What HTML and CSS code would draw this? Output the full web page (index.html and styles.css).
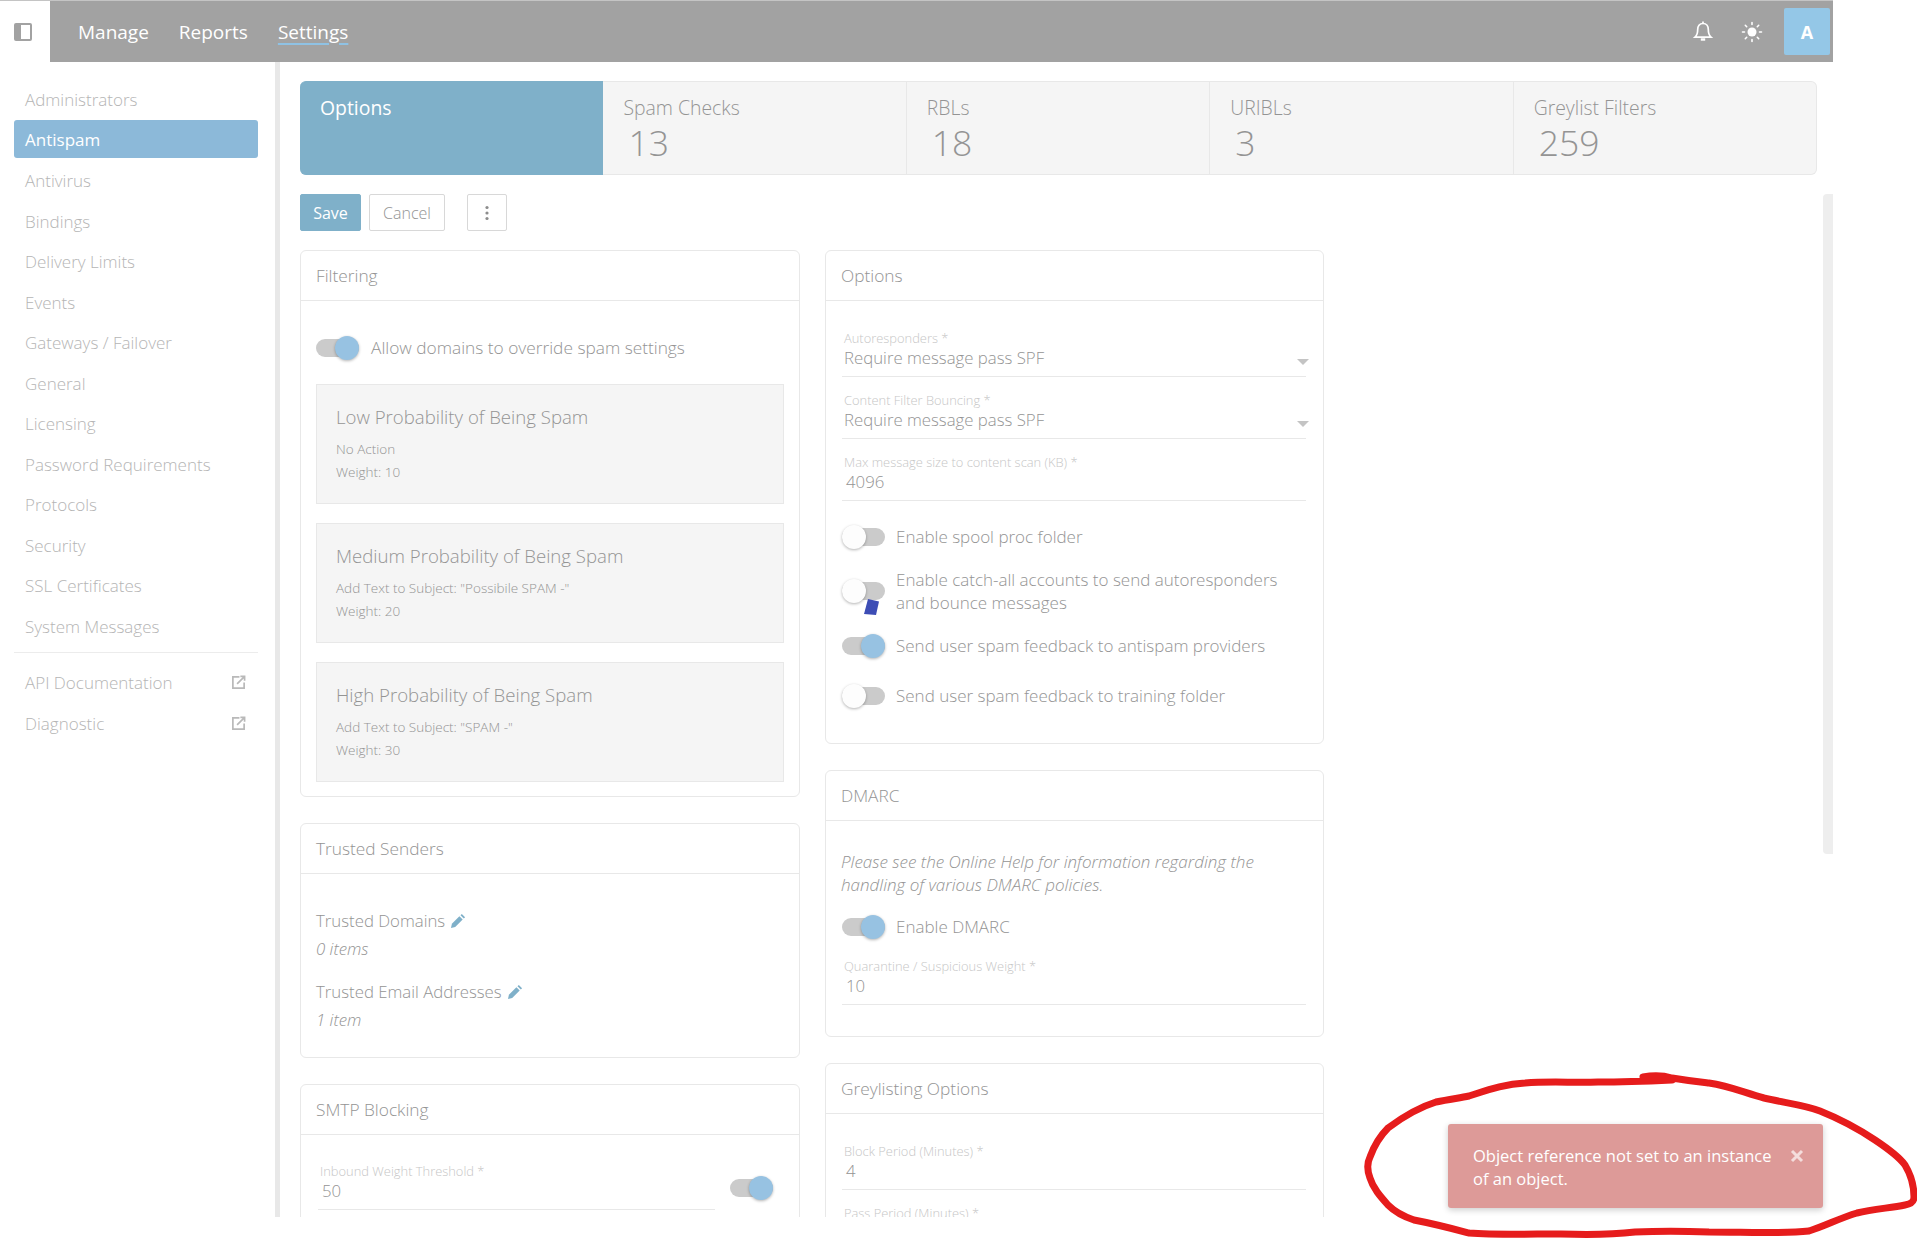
FILE: index.html
```html
<!DOCTYPE html>
<html lang="en">

<head>
    <meta charset="UTF-8">
    <title>Antispam | Settings</title>
    <link rel="stylesheet" href="styles.css">
</head>

<body>
    <div class="app">
        <!-- top bar -->
        <header class="top-bar">
            <div class="toggle-box">
                <svg width="20" height="20" viewBox="0 0 20 20">
                    <rect x="1" y="1" width="18" height="18" rx="2" fill="#a2a2a2" />
                    <rect x="8" y="3" width="9" height="14" fill="#fff" />
                </svg>
            </div>
            <nav class="top-nav">
                <a href="#">Manage</a>
                <a href="#">Reports</a>
                <a href="#" class="current">Settings</a>
            </nav>
            <div class="top-actions">
                <svg class="bell" width="22" height="24" viewBox="0 0 22 24" fill="none" stroke="#fff" stroke-width="1.7">
                    <path d="M11 3.5c-3.6 0-5.3 2.7-5.3 6 0 3.6-.9 6-2.7 7.6h16c-1.800-1.600-2.700-4-2.700-7.600 0-3.300-1.700-6-5.300-6z" />
                    <path d="M11 1.500v2" />
                    <path d="M8.800 19.500h4.400" stroke-width="2.400" />
                </svg>
                <svg class="sun" width="22" height="22" viewBox="0 0 22 22" fill="#fff" stroke="#fff" stroke-width="1.600" stroke-linecap="round">
                    <circle cx="11" cy="11" r="4.500" stroke="none" />
                    <path d="M11 1.500v2M11 18.500v2M1.500 11h2M18.500 11h2M4.300 4.300l1.400 1.400M16.300 16.300l1.400 1.400M4.300 17.700l1.400-1.400M16.300 5.700l1.400-1.400" />
                </svg>
                <div class="avatar">A</div>
            </div>
        </header>

        <div class="layout">
            <!-- side menu -->
            <aside class="side-menu">
                <a href="#">Administrators</a>
                <a href="#" class="active">Antispam</a>
                <a href="#">Antivirus</a>
                <a href="#">Bindings</a>
                <a href="#">Delivery Limits</a>
                <a href="#">Events</a>
                <a href="#">Gateways / Failover</a>
                <a href="#">General</a>
                <a href="#">Licensing</a>
                <a href="#">Password Requirements</a>
                <a href="#">Protocols</a>
                <a href="#">Security</a>
                <a href="#">SSL Certificates</a>
                <a href="#">System Messages</a>
                <div class="side-divider"></div>
                <a href="#" class="ext">API Documentation
                    <svg width="15" height="15" viewBox="0 0 16 16" fill="none" stroke="#b9b9b9" stroke-width="1.800">
                        <path d="M9 2H2v12h12V8" />
                        <path d="M6.500 9.500L14 2M10 1.500h4.500V6" />
                    </svg>
                </a>
                <a href="#" class="ext">Diagnostic
                    <svg width="15" height="15" viewBox="0 0 16 16" fill="none" stroke="#b9b9b9" stroke-width="1.800">
                        <path d="M9 2H2v12h12V8" />
                        <path d="M6.500 9.500L14 2M10 1.500h4.500V6" />
                    </svg>
                </a>
            </aside>

            <main class="main">
                <!-- tabs -->
                <div class="tabs">
                    <div class="tab selected"><span class="tab-label">Options</span></div>
                    <div class="tab"><span class="tab-label">Spam Checks</span><span class="tab-count">13</span></div>
                    <div class="tab"><span class="tab-label">RBLs</span><span class="tab-count">18</span></div>
                    <div class="tab"><span class="tab-label">URIBLs</span><span class="tab-count">3</span></div>
                    <div class="tab"><span class="tab-label">Greylist Filters</span><span class="tab-count">259</span></div>
                </div>

                <div class="actions">
                    <button class="btn btn-save">Save</button>
                    <button class="btn btn-cancel">Cancel</button>
                    <button class="btn btn-more">
                        <svg width="4" height="16" viewBox="0 0 4 16" fill="#8d8d8d">
                            <circle cx="2" cy="2.500" r="1.600" />
                            <circle cx="2" cy="8" r="1.600" />
                            <circle cx="2" cy="13.500" r="1.600" />
                        </svg>
                    </button>
                </div>

                <div class="columns">
                    <div class="column">
                        <section class="card">
                            <h3 class="card-title">Filtering</h3>
                            <div class="card-body filtering">
                                <div class="switch-row first">
                                    <span class="switch on"></span>
                                    <span>Allow domains to override spam settings</span>
                                </div>
                                <div class="level">
                                    <h4>Low Probability of Being Spam</h4>
                                    <p>No Action</p>
                                    <p>Weight: 10</p>
                                </div>
                                <div class="level">
                                    <h4>Medium Probability of Being Spam</h4>
                                    <p>Add Text to Subject: "Possibile SPAM -"</p>
                                    <p>Weight: 20</p>
                                </div>
                                <div class="level">
                                    <h4>High Probability of Being Spam</h4>
                                    <p>Add Text to Subject: "SPAM -"</p>
                                    <p>Weight: 30</p>
                                </div>
                            </div>
                        </section>

                        <section class="card">
                            <h3 class="card-title">Trusted Senders</h3>
                            <div class="card-body trusted">
                                <div class="list-name">Trusted Domains
                                    <svg width="16" height="16" viewBox="0 0 16 16" fill="#7fb0c9">
                                        <path d="M1 15l.9-4.200 7.500-7.500 3.300 3.300-7.500 7.500z" />
                                        <path d="M10.500 2.200l1.300-1.300 3.300 3.300-1.300 1.300z" />
                                    </svg>
                                </div>
                                <div class="list-count">0 items</div>
                                <div class="list-name">Trusted Email Addresses
                                    <svg width="16" height="16" viewBox="0 0 16 16" fill="#7fb0c9">
                                        <path d="M1 15l.9-4.200 7.500-7.500 3.300 3.300-7.500 7.500z" />
                                        <path d="M10.500 2.200l1.300-1.300 3.300 3.300-1.300 1.300z" />
                                    </svg>
                                </div>
                                <div class="list-count">1 item</div>
                            </div>
                        </section>

                        <section class="card">
                            <h3 class="card-title">SMTP Blocking</h3>
                            <div class="card-body smtp">
                                <div class="field">
                                    <label>Inbound Weight Threshold *</label>
                                    <div class="value num">50</div>
                                </div>
                                <span class="switch on"></span>
                            </div>
                        </section>
                    </div>

                    <div class="column narrow">
                        <section class="card">
                            <h3 class="card-title">Options</h3>
                            <div class="card-body fields">
                                <div class="field select">
                                    <label>Autoresponders *</label>
                                    <div class="value">Require message pass SPF</div>
                                </div>
                                <div class="field select">
                                    <label>Content Filter Bouncing *</label>
                                    <div class="value">Require message pass SPF</div>
                                </div>
                                <div class="field">
                                    <label>Max message size to content scan (KB) *</label>
                                    <div class="value num">4096</div>
                                </div>
                                <div class="switch-row">
                                    <span class="switch"></span>
                                    <span>Enable spool proc folder</span>
                                </div>
                                <div class="switch-row wrap">
                                    <span class="switch"></span>
                                    <span>Enable catch-all accounts to send autoresponders and bounce messages</span>
                                </div>
                                <div class="switch-row roomy">
                                    <span class="switch on"></span>
                                    <span>Send user spam feedback to antispam providers</span>
                                </div>
                                <div class="switch-row last">
                                    <span class="switch"></span>
                                    <span>Send user spam feedback to training folder</span>
                                </div>
                            </div>
                        </section>

                        <section class="card">
                            <h3 class="card-title">DMARC</h3>
                            <div class="card-body fields dmarc">
                                <p class="note">Please see the Online Help for information regarding the handling of various DMARC policies.</p>
                                <div class="switch-row">
                                    <span class="switch on"></span>
                                    <span>Enable DMARC</span>
                                </div>
                                <div class="field">
                                    <label>Quarantine / Suspicious Weight *</label>
                                    <div class="value num">10</div>
                                </div>
                            </div>
                        </section>

                        <section class="card">
                            <h3 class="card-title">Greylisting Options</h3>
                            <div class="card-body fields">
                                <div class="field">
                                    <label>Block Period (Minutes) *</label>
                                    <div class="value num">4</div>
                                </div>
                                <div class="field">
                                    <label>Pass Period (Minutes) *</label>
                                </div>
                            </div>
                        </section>
                    </div>
                </div>

                <div class="scroll-thumb"></div>
            </main>
        </div>

        <!-- toast -->
        <div class="toast">
            <span>Object reference not set to an instance of an object.</span>
            <svg width="14" height="14" viewBox="0 0 14 14" stroke="#f4dddc" stroke-width="3">
                <path d="M2 2l10 10M12 2L2 12" />
            </svg>
        </div>
    </div>

    <!-- marks drawn on top of the screenshot -->
    <svg class="marks" width="1917" height="1240" viewBox="0 0 1917 1240" fill="none">
        <path d="M1643 1077C1655 1075 1665 1076 1672 1078C1690 1081 1700 1082 1709 1083C1730 1086 1745 1093 1764 1098C1785 1103 1805 1105 1820 1111C1840 1119 1860 1130 1875 1140C1890 1150 1900 1158 1905 1165C1911 1175 1914 1188 1914 1197C1914 1202 1911 1204 1905 1205C1890 1208 1873 1209 1857 1213C1840 1218 1825 1226 1809 1231C1780 1234 1745 1232 1709 1232C1680 1231 1660 1231 1635 1232C1610 1235 1590 1235 1561 1234C1530 1234 1495 1235 1469 1233C1450 1228 1435 1224 1414 1220C1405 1217 1395 1212 1388 1205C1380 1196 1373 1188 1370 1178C1367 1170 1367 1163 1370 1157C1374 1146 1380 1136 1388 1128C1404 1116 1420 1107 1436 1102C1450 1099 1460 1098 1469 1096C1488 1090 1505 1084 1525 1083C1550 1081 1575 1083 1598 1082C1625 1082 1650 1081 1672 1080" stroke="#e61c1c" stroke-width="7" stroke-linecap="round" />
        <path d="M868 599l11 2.500-3 13.500-12-1z" fill="#3d4db5" />
    </svg>
</body>

</html>
```

FILE: styles.css
```css
:root {
    --text-grey: #949494;
    --text-light: #c6c6c6;
    --border-color: #e8e8e8;
    --blue: #8fc2e4;
    --tab-blue: #7fb0c9;
}

* {
    margin: 0;
    padding: 0;
    box-sizing: border-box;
    font-family: "Open Sans", "Liberation Sans", sans-serif;
}

body {
    background: white;
    color: var(--text-grey);
    font-size: 15px;
    font-weight: 300;
    overflow: hidden;
}

a {
    color: inherit;
    text-decoration: none;
}

.app {
    position: relative;
    width: 1833px;
    height: 1218px;
    overflow: hidden;
}

/* top bar */
.top-bar {
    display: flex;
    align-items: center;
    height: 62px;
    background: #a2a2a2;
    border-top: 1px solid #c4c4c4;
}

.toggle-box {
    display: flex;
    align-items: center;
    justify-content: center;
    width: 50px;
    height: 100%;
    padding-right: 5px;
    background: white;
}

.top-nav {
    display: flex;
    gap: 30px;
    margin-left: 28px;
    color: white;
    font-size: 19px;
    font-weight: 400;
}

.top-nav .current {
    text-decoration: underline 2px var(--blue);
    text-underline-offset: 4px;
}

.top-actions {
    display: flex;
    align-items: center;
    margin-left: auto;
    margin-right: 3px;
}

.bell {
    margin-right: 27px;
}

.sun {
    margin-right: 21px;
}

.avatar {
    display: flex;
    align-items: center;
    justify-content: center;
    width: 46px;
    height: 47px;
    background: #94c7e7;
    border-radius: 2px;
    color: white;
    font-size: 18px;
    font-weight: 700;
}

.layout {
    display: flex;
    height: 1155px;
}

/* side menu */
.side-menu {
    flex: 0 0 280px;
    padding: 17.500px 17px 0 14px;
    border-right: 5px solid var(--border-color);
    font-size: 17px;
    color: #b5b5b5;
}

.side-menu a {
    display: flex;
    align-items: center;
    justify-content: space-between;
    height: 40.500px;
    padding: 0 12px 0 11px;
}

.side-menu .active {
    height: 38px;
    margin: 0 0 2.500px;
    background: #8cb9d9;
    border-radius: 3px;
    color: white;
    font-weight: 400;
}

.side-divider {
    height: 1px;
    margin: 5px 0 10px;
    background: #ececec;
}

/* main column */
.main {
    position: relative;
    flex: 1;
    padding: 19px 16px 0 20px;
    overflow: hidden;
}

.tabs {
    display: flex;
    height: 94px;
}

.tab {
    flex: 1;
    display: flex;
    flex-direction: column;
    padding: 13px 20px;
    background: #f5f5f5;
    border: 1px solid var(--border-color);
    border-left-width: 0;
}

.tab:last-child {
    border-radius: 0 6px 6px 0;
}

.tab.selected {
    background: var(--tab-blue);
    border-color: var(--tab-blue);
    border-radius: 6px 0 0 6px;
    color: white;
}

.tab-label {
    font-size: 19.400px;
    line-height: 26px;
}

.tab.selected .tab-label {
    font-weight: 400;
}

.tab-count {
    margin-left: 5px;
    font-size: 35.500px;
    line-height: 42px;
}

.actions {
    display: flex;
    margin: 19px 0;
}

.btn {
    height: 37px;
    margin-right: 8px;
    background: white;
    border: 1px solid #d8d8d8;
    border-radius: 2px;
    color: var(--text-grey);
    font-size: 16px;
    font-weight: 300;
}

.btn-save {
    width: 61px;
    background: var(--tab-blue);
    border-color: var(--tab-blue);
    color: white;
    font-weight: 400;
}

.btn-cancel {
    width: 76px;
}

.btn-more {
    display: flex;
    align-items: center;
    justify-content: center;
    width: 40px;
    margin-left: 14px;
}

.columns {
    display: flex;
    gap: 25px;
}

.column {
    display: flex;
    flex-direction: column;
    gap: 26px;
    width: 500px;
}

.column.narrow {
    width: 499px;
}

/* cards */
.card {
    background: white;
    border: 1px solid var(--border-color);
    border-radius: 6px;
}

.card-title {
    height: 50px;
    padding: 0 15px;
    border-bottom: 1px solid var(--border-color);
    font-size: 17.300px;
    font-weight: 300;
    line-height: 49px;
}

.card-body {
    padding: 0 15px;
}

.filtering {
    padding-top: 35px;
    padding-bottom: 14px;
}

.switch-row {
    display: flex;
    align-items: center;
    gap: 11px;
    margin-bottom: 20px;
    font-size: 17px;
    line-height: 23px;
}

.switch-row.first {
    gap: 12px;
    margin-bottom: 25px;
    font-size: 17.300px;
}

.field + .switch-row {
    margin-top: 24px;
}

.switch-row.roomy {
    margin-bottom: 27px;
}

.switch-row.last {
    margin-bottom: 36px;
}

.switch {
    position: relative;
    flex: 0 0 43px;
    height: 18px;
    background: #cbcbcb;
    border-radius: 9px;
}

.switch::after {
    content: "";
    position: absolute;
    top: -3px;
    left: 0;
    width: 24px;
    height: 24px;
    background: #fdfdfd;
    border-radius: 50%;
    box-shadow: 0 1px 3px rgba(0, 0, 0, 0.3);
}

.switch.on::after {
    left: auto;
    right: 0;
    background: #97c2e2;
}

.level {
    height: 120px;
    margin-bottom: 19px;
    padding: 19px 19px;
    background: #f5f5f5;
    border: 1px solid var(--border-color);
}

.level:last-child {
    margin-bottom: 0;
}

.level h4 {
    margin-bottom: 8px;
    font-size: 18.600px;
    font-weight: 300;
    line-height: 26px;
}

.level p {
    font-size: 13.500px;
    line-height: 23px;
}

.trusted {
    padding-top: 35px;
    padding-bottom: 25px;
    font-size: 16.800px;
}

.list-name {
    display: flex;
    align-items: center;
    gap: 5px;
    line-height: 24px;
}

.list-count {
    margin: 4px 0 19px;
    font-style: italic;
    line-height: 24px;
}

.list-count:last-child {
    margin-bottom: 0;
}

.smtp {
    display: flex;
    align-items: flex-start;
    gap: 15px;
    padding-top: 28px;
}

.smtp .field {
    width: 397px;
    margin-left: 2px;
}

.smtp .switch {
    margin-top: 16px;
}

.fields {
    padding: 29px 17px 0 16px;
}

.field {
    position: relative;
    margin-bottom: 15px;
    padding-bottom: 6px;
    border-bottom: 1px solid var(--border-color);
}

.field label {
    display: block;
    padding-left: 2px;
    color: var(--text-light);
    font-size: 12.900px;
    line-height: 16px;
}

.value {
    padding-left: 2px;
    font-size: 16.800px;
    line-height: 24px;
}

.value.num {
    padding-left: 4px;
}

.select::after {
    content: "";
    position: absolute;
    right: -3px;
    top: 29px;
    border-left: 6px solid transparent;
    border-right: 6px solid transparent;
    border-top: 6px solid #c4c4c4;
}

.dmarc {
    padding-left: 15px;
    padding-right: 15px;
}

.note {
    margin-bottom: 19px;
    font-size: 17px;
    font-style: italic;
    line-height: 23px;
}

.dmarc .switch-row {
    padding-left: 1px;
}

.dmarc .field {
    margin: 0 2px 31px 1px;
}

/* right side scrollbar */
.scroll-thumb {
    position: absolute;
    top: 132px;
    right: 0;
    width: 10px;
    height: 660px;
    background: #eeeeee;
    border-radius: 4px 0 0 4px;
}

/* toast */
.toast {
    position: absolute;
    top: 1124px;
    left: 1448px;
    display: flex;
    align-items: flex-start;
    justify-content: space-between;
    width: 375px;
    height: 84px;
    padding: 20px 19px 0 25px;
    background: #dd9a98;
    border-radius: 3px;
    box-shadow: 0 2px 6px rgba(0, 0, 0, 0.2);
    color: white;
    font-size: 16.500px;
    font-weight: 400;
    line-height: 23px;
}

.toast span {
    width: 305px;
}

.toast svg {
    margin-top: 5px;
}

/* red and blue marks */
.marks {
    position: absolute;
    top: 0;
    left: 0;
}
```
